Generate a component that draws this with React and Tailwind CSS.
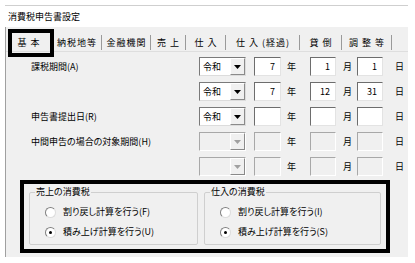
import React from 'react';

const tabs = [
  { label: '基 本', w: 'w-[46px]' },
  { label: '納税地等', w: 'w-[50px]' },
  { label: '金融機関', w: 'w-[49px]' },
  { label: '売 上', w: 'w-[35px]' },
  { label: '仕 入', w: 'w-[40px]' },
  { label: '仕 入 (経過)', w: 'w-[74px]' },
  { label: '貸 倒', w: 'w-[42px]' },
  { label: '調 整 等', w: 'w-[50px]' },
];

const rows = [
  { label: '課税期間(A)', era: '令和', y: '7', m: '1', d: '1', on: true },
  { label: '', era: '令和', y: '7', m: '12', d: '31', on: true },
  { label: '申告書提出日(R)', era: '令和', y: '', m: '', d: '', on: true },
  { label: '中間申告の場合の対象期間(H)', era: '', y: '', m: '', d: '', on: false },
  { label: '', era: '', y: '', m: '', d: '', on: false },
];

function Combo({ value, on }) {
  return (
    <div
      className={`w-[47px] h-[19px] flex border ${
        on
          ? 'bg-white border-t-[#7a7a7a] border-l-[#7a7a7a] border-r-[#dcdcdc] border-b-[#dcdcdc]'
          : 'bg-[#f0f0f0] border-t-[#a8a8a8] border-l-[#a8a8a8] border-r-white border-b-white'
      }`}
    >
      <div className="flex-1 pl-[3px] leading-[17px]">{value}</div>
      <div className="w-[15px] h-[17px] bg-[#f0f0f0] border border-t-white border-l-white border-r-[#8a8a8a] border-b-[#8a8a8a] flex items-center justify-center">
        <svg width="7" height="4" viewBox="0 0 7 4">
          <path d="M0 0h7L3.5 4z" fill={on ? '#000' : '#a0a0a0'} />
        </svg>
      </div>
    </div>
  );
}

function Box({ value, on, w }) {
  return (
    <div
      className={`${w} h-[19px] border text-right pr-[5px] leading-[17px] ${
        on
          ? 'bg-white border-t-[#6d6d6d] border-l-[#6d6d6d] border-r-[#e3e3e3] border-b-[#e3e3e3]'
          : 'bg-[#f0f0f0] border-t-[#a8a8a8] border-l-[#a8a8a8] border-r-white border-b-white'
      }`}
    >
      {value}
    </div>
  );
}

function Radio({ checked, label }) {
  return (
    <div className="flex items-center h-[12px]">
      <div className="w-[11px] h-[11px] rounded-full bg-white border border-t-[#808080] border-l-[#808080] border-r-[#dcdcdc] border-b-[#dcdcdc] flex items-center justify-center">
        {checked && <div className="w-[3px] h-[3px] rounded-full bg-black" />}
      </div>
      <span className="ml-[7px]">{label}</span>
    </div>
  );
}

function Group({ title, items, w }) {
  return (
    <fieldset className={`${w} h-[59px] border border-[#cfcfcf] rounded-[2px] px-[15px]`}>
      <legend className="ml-[-10px] px-[1px] leading-[12px]">{title}</legend>
      <div className="flex flex-col gap-[8px] pt-[8px]">
        {items.map((it) => (
          <Radio key={it.label} checked={it.checked} label={it.label} />
        ))}
      </div>
    </fieldset>
  );
}

export default function App() {
  return (
    <div className="w-[415px] h-[263px] bg-white pt-[5px] pl-[5px] text-[9px] text-black font-['Noto_Sans_CJK_JP',sans-serif] [font-feature-settings:'palt']">
      <div className="w-[403px] border-t border-[#cfcfcf]">
        <div className="h-[21px] pl-[3px] flex items-center">消費税申告書設定</div>

        <div className="h-[230px] bg-[#f0f0f0] border-l border-[#a0a0a0]">
          <div className="relative h-[25px] pt-[8px] border-b border-[#dedede]">
            <div className="flex">
              {tabs.map((t) => (
                <div
                  key={t.label}
                  className={`${t.w} h-[15px] pl-[1px] border-r border-[#9a9a9a] flex items-center justify-center whitespace-pre tracking-[1px]`}
                >
                  {t.label}
                </div>
              ))}
            </div>
            <div className="absolute left-[2px] top-[2px] w-[46px] h-[28px] border-4 border-black" />
          </div>

          <div className="pt-[5px] flex flex-col gap-[6px]">
            {rows.map((r, i) => (
              <div key={i} className="flex items-center h-[19px]">
                <div className="w-[193px] pl-[25px]">{r.label}</div>
                <Combo value={r.era} on={r.on} />
                <div className="ml-[8px]">
                  <Box value={r.y} on={r.on} w="w-[27px]" />
                </div>
                <div className="w-[29px] pl-[6px]">年</div>
                <Box value={r.m} on={r.on} w="w-[26px]" />
                <div className="w-[21px] pl-[7px]">月</div>
                <Box value={r.d} on={r.on} w="w-[26px]" />
                <div className="pl-[12px]">日</div>
              </div>
            ))}
          </div>

          <div className="mt-[4px] ml-[14px] w-[370px] h-[73px] border-4 border-black pt-[2px] pl-[5px] flex gap-[6px]">
            <Group
              title="売上の消費税"
              w="w-[169px]"
              items={[
                { label: '割り戻し計算を行う(F)', checked: false },
                { label: '積み上げ計算を行う(U)', checked: true },
              ]}
            />
            <Group
              title="仕入の消費税"
              w="w-[177px]"
              items={[
                { label: '割り戻し計算を行う(I)', checked: false },
                { label: '積み上げ計算を行う(S)', checked: true },
              ]}
            />
          </div>
        </div>
      </div>
    </div>
  );
}
